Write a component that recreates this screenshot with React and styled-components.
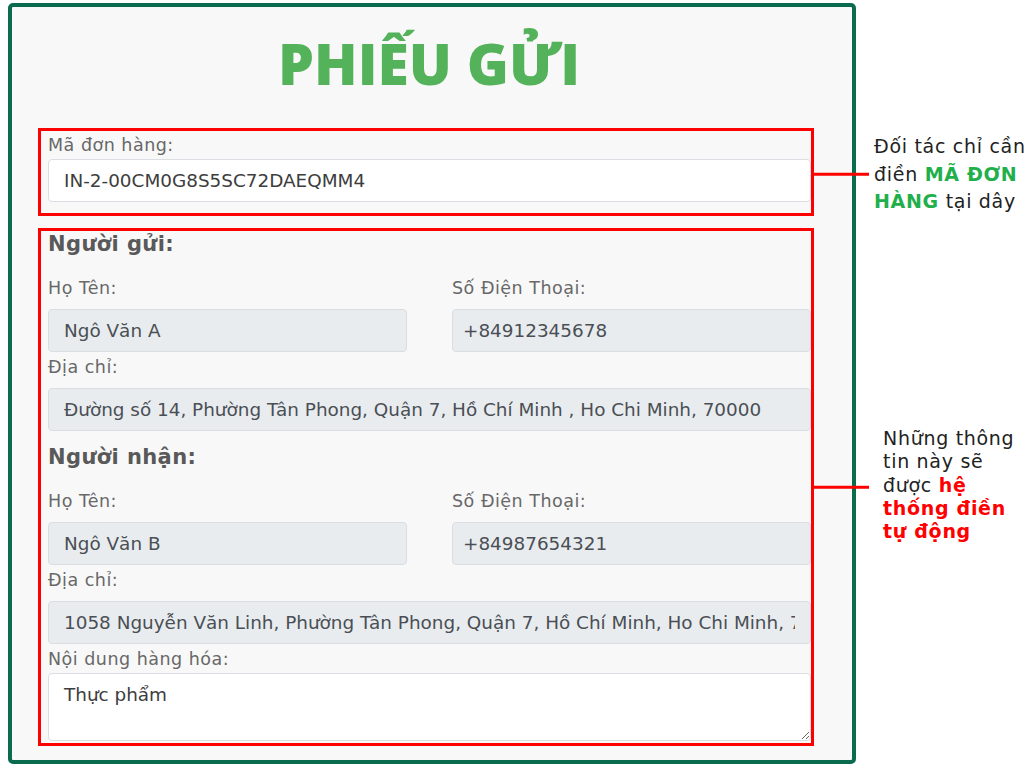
import React from "react";
import styled, { createGlobalStyle } from "styled-components";

const BODY_FONT = `"DejaVu Sans", "Open Sans", "Noto Sans", sans-serif`;

const GlobalStyle = createGlobalStyle`
  html, body {
    margin: 0;
    padding: 0;
    background: #ffffff;
    overflow: hidden;
  }
  body {
    font-family: ${BODY_FONT};
  }
`;

const Page = styled.div`
  width: 1024px;
  height: 768px;
  overflow: hidden;
  box-sizing: border-box;
  padding: 3px 0 0 8px;
`;

const Frame = styled.div`
  width: 848px;
  height: 761px;
  box-sizing: border-box;
  border: 4px solid #0b6b4f;
  border-radius: 5px;
  background: #f8f8f8;
  padding: 0 38px 0 26px;
  display: flex;
  flex-direction: column;
`;

const Title = styled.h1`
  margin: 18px 0 27px;
  padding-left: 6px;
  font-family: "Open Sans", "Noto Sans", sans-serif;
  font-weight: 800;
  font-size: 57px;
  line-height: 76px;
  color: #54b25a;
  text-align: center;
`;

const RedBox = styled.section`
  position: relative;
  border: 3px solid #ff0000;
  padding: ${(p) => p.$pad};
  margin-bottom: ${(p) => p.$mb || "0"};
  display: flex;
  flex-direction: column;
`;

const Label = styled.label`
  display: block;
  font-family: ${BODY_FONT};
  font-size: 17.5px;
  letter-spacing: 0.5px;
  line-height: 20px;
  color: #686868;
  margin: ${(p) => (p.$first ? "0" : "5px")} 0 ${(p) => (p.$tight ? "4px" : "11px")};
`;

const SectionHeading = styled.h2`
  margin: ${(p) => (p.$first ? "0" : "13px")} 0 21px;
  font-family: ${BODY_FONT};
  font-size: 21px;
  letter-spacing: 0.4px;
  line-height: 26px;
  font-weight: 700;
  color: #595959;
`;

const Input = styled.input`
  box-sizing: border-box;
  width: 100%;
  height: 43px;
  margin: 0;
  padding: 0 15px 0 ${(p) => (p.$narrow ? "10px" : "15px")};
  font-family: ${BODY_FONT};
  font-size: 18.4px;
  color: ${(p) => (p.$editable ? "#3d3d3d" : "#4a4f55")};
  background: ${(p) => (p.$editable ? "#ffffff" : "#e9ecef")};
  border: 1px solid #dadee2;
  border-radius: 4px;
  outline: none;
`;

const TextArea = styled.textarea`
  box-sizing: border-box;
  width: 100%;
  height: 68px;
  margin: 0;
  padding: 9px 15px;
  font-family: ${BODY_FONT};
  font-size: 18.4px;
  line-height: 24px;
  color: #3d3d3d;
  background: #ffffff;
  border: 1px solid #dadee2;
  border-radius: 4px;
  outline: none;
  resize: vertical;
`;

const Row = styled.div`
  display: grid;
  grid-template-columns: 1fr 1fr;
  column-gap: 45px;
`;

const Field = styled.div`
  display: flex;
  flex-direction: column;
`;

const Callout = styled.div`
  position: absolute;
  left: calc(100% + 3px);
  top: calc(50% + ${(p) => p.$shift || "0px"});
  transform: translateY(-50%);
  display: flex;
  align-items: center;
`;

const Connector = styled.div`
  width: 55px;
  height: 3px;
  background: #ff0000;
  flex: none;
`;

const Note = styled.div`
  margin-left: ${(p) => p.$gap};
  margin-top: ${(p) => p.$mt || "0"};
  font-family: ${BODY_FONT};
  font-size: 19px;
  letter-spacing: 0.7px;
  line-height: ${(p) => p.$lh};
  color: #222222;
  white-space: nowrap;
`;

const Strong = styled.b`
  font-weight: 700;
  color: ${(p) => p.$color};
`;

export default function App() {
  return (
    <>
      <GlobalStyle />
      <Page>
        <Frame>
          <Title>PHIẾU GỬI</Title>

          <RedBox $pad="4px 0 11px 7px" $mb="12px">
            <Label $first $tight>Mã đơn hàng:</Label>
            <Input $editable readOnly value="IN-2-00CM0G8S5SC72DAEQMM4" />
            <Callout $shift="2px">
              <Connector />
              <Note $gap="5px" $lh="27.5px">
                Đối tác chỉ cần
                <br />
                điền <Strong $color="#1faf4b">MÃ ĐƠN</Strong>
                <br />
                <Strong $color="#1faf4b">HÀNG</Strong> tại dây
              </Note>
            </Callout>
          </RedBox>

          <RedBox $pad="0 0 2px 7px">
            <SectionHeading $first>Người gửi:</SectionHeading>
            <Row>
              <Field>
                <Label $first>Họ Tên:</Label>
                <Input readOnly value="Ngô Văn A" />
              </Field>
              <Field>
                <Label $first>Số Điện Thoại:</Label>
                <Input $narrow readOnly value="+84912345678" />
              </Field>
            </Row>
            <Label>Địa chỉ:</Label>
            <Input
              readOnly
              value="Đường số 14, Phường Tân Phong, Quận 7, Hồ Chí Minh , Ho Chi Minh, 70000"
            />

            <SectionHeading>Người nhận:</SectionHeading>
            <Row>
              <Field>
                <Label $first>Họ Tên:</Label>
                <Input readOnly value="Ngô Văn B" />
              </Field>
              <Field>
                <Label $first>Số Điện Thoại:</Label>
                <Input $narrow readOnly value="+84987654321" />
              </Field>
            </Row>
            <Label>Địa chỉ:</Label>
            <Input
              readOnly
              value="1058 Nguyễn Văn Linh, Phường Tân Phong, Quận 7, Hồ Chí Minh, Ho Chi Minh, 70000"
            />
            <Label $tight>Nội dung hàng hóa:</Label>
            <TextArea readOnly value="Thực phẩm" />

            <Callout>
              <Connector />
              <Note $gap="14px" $lh="23.3px" $mt="-4px">
                Những thông
                <br />
                tin này sẽ
                <br />
                được <Strong $color="#ff0000">hệ</Strong>
                <br />
                <Strong $color="#ff0000">thống điền</Strong>
                <br />
                <Strong $color="#ff0000">tự động</Strong>
              </Note>
            </Callout>
          </RedBox>
        </Frame>
      </Page>
    </>
  );
}
